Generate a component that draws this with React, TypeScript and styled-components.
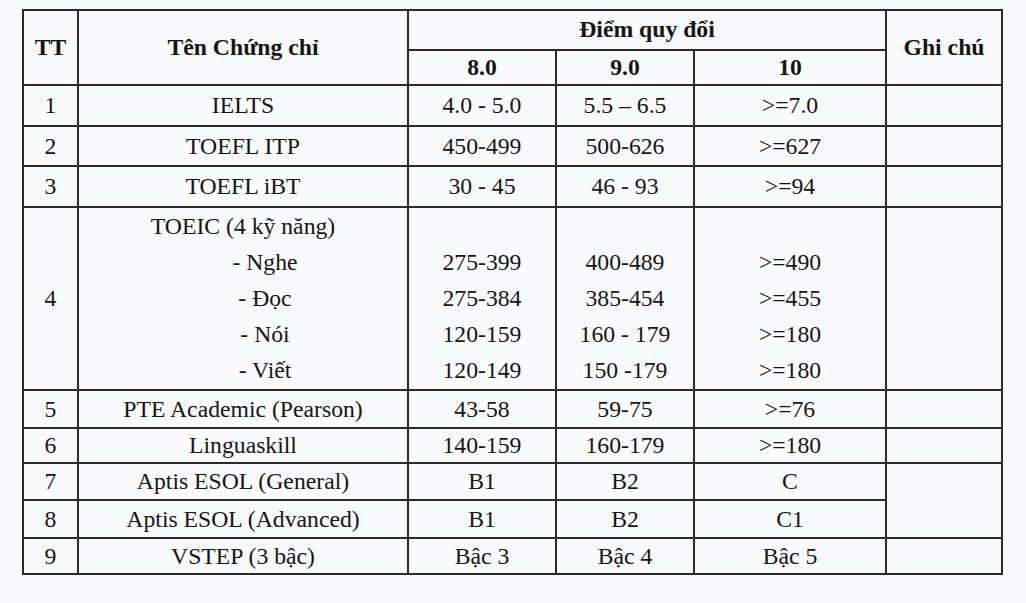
import React from "react";
import styled, { createGlobalStyle } from "styled-components";

const Global = createGlobalStyle`
  html, body { margin: 0; padding: 0; background: #f9fafb; }
  body { font-family: "Liberation Serif", "Times New Roman", serif; color: #151515; }
`;

const Page = styled.div`
  width: 1026px;
  height: 603px;
  padding: 9px 0 0 22px;
  box-sizing: border-box;
  background: #f9fafb;
`;

const Table = styled.table`
  border-collapse: collapse;
  table-layout: fixed;
  width: 979px;
  font-family: "Liberation Serif", "Times New Roman", serif;
  font-size: 23.7px;
  color: #151515;
`;

const Row = styled.tr<{ $h: number }>`
  height: ${(p) => p.$h}px;
`;

const Head = styled.th`
  border: 2px solid #2b2b2b;
  font-family: "Liberation Serif", "Times New Roman", serif;
  font-size: 23.7px;
  font-weight: bold;
  text-align: center;
  vertical-align: middle;
  padding: 0;
  line-height: 1;
`;

const Cell = styled.td<{ $top?: boolean }>`
  border: 2px solid #2b2b2b;
  font-family: "Liberation Serif", "Times New Roman", serif;
  font-size: 23.7px;
  text-align: center;
  vertical-align: ${(p) => (p.$top ? "top" : "middle")};
  padding: 0;
  line-height: 1.1;
`;

const Stack = styled.div`
  display: flex;
  flex-direction: column;
`;

const Line = styled.div<{ $indent?: boolean }>`
  height: 36px;
  line-height: 36px;
  text-align: center;
  padding-left: ${(p) => (p.$indent ? "44px" : "0")};
`;

type Simple = { tt: string; name: string; a: string; b: string; c: string; h: number };

const top: Simple[] = [
  { tt: "1", name: "IELTS", a: "4.0 - 5.0", b: "5.5 – 6.5", c: ">=7.0", h: 41 },
  { tt: "2", name: "TOEFL ITP", a: "450-499", b: "500-626", c: ">=627", h: 40 },
  { tt: "3", name: "TOEFL iBT", a: "30 - 45", b: "46 - 93", c: ">=94", h: 41 },
];

const toeic = {
  skills: ["- Nghe", "- Đọc", "- Nói", "- Viết"],
  a: ["275-399", "275-384", "120-159", "120-149"],
  b: ["400-489", "385-454", "160 - 179", "150 -179"],
  c: [">=490", ">=455", ">=180", ">=180"],
};

const ScoreStack: React.FC<{ values: string[] }> = ({ values }) => (
  <Stack>
    <Line>&nbsp;</Line>
    {values.map((v, i) => (
      <Line key={i}>{v}</Line>
    ))}
  </Stack>
);

export default function App() {
  return (
    <Page>
      <Global />
      <Table>
        <colgroup>
          <col style={{ width: 55 }} />
          <col style={{ width: 330 }} />
          <col style={{ width: 148 }} />
          <col style={{ width: 138 }} />
          <col style={{ width: 192 }} />
          <col style={{ width: 116 }} />
        </colgroup>
        <tbody>
          <Row $h={40}>
            <Head rowSpan={2}>TT</Head>
            <Head rowSpan={2}>Tên Chứng chỉ</Head>
            <Head colSpan={3}>Điểm quy đổi</Head>
            <Head rowSpan={2}>Ghi chú</Head>
          </Row>
          <Row $h={35}>
            <Head>8.0</Head>
            <Head>9.0</Head>
            <Head>10</Head>
          </Row>
          {top.map((r) => (
            <Row $h={r.h} key={r.tt}>
              <Cell>{r.tt}</Cell>
              <Cell>{r.name}</Cell>
              <Cell>{r.a}</Cell>
              <Cell>{r.b}</Cell>
              <Cell>{r.c}</Cell>
              <Cell />
            </Row>
          ))}
          <Row $h={183}>
            <Cell>4</Cell>
            <Cell $top>
              <Stack>
                <Line>TOEIC (4 kỹ năng)</Line>
                {toeic.skills.map((s) => (
                  <Line $indent key={s}>
                    {s}
                  </Line>
                ))}
              </Stack>
            </Cell>
            <Cell $top>
              <ScoreStack values={toeic.a} />
            </Cell>
            <Cell $top>
              <ScoreStack values={toeic.b} />
            </Cell>
            <Cell $top>
              <ScoreStack values={toeic.c} />
            </Cell>
            <Cell />
          </Row>
          <Row $h={38}>
            <Cell>5</Cell>
            <Cell>PTE Academic (Pearson)</Cell>
            <Cell>43-58</Cell>
            <Cell>59-75</Cell>
            <Cell>&gt;=76</Cell>
            <Cell />
          </Row>
          <Row $h={35}>
            <Cell>6</Cell>
            <Cell>Linguaskill</Cell>
            <Cell>140-159</Cell>
            <Cell>160-179</Cell>
            <Cell>&gt;=180</Cell>
            <Cell />
          </Row>
          <Row $h={37}>
            <Cell>7</Cell>
            <Cell>Aptis ESOL (General)</Cell>
            <Cell>B1</Cell>
            <Cell>B2</Cell>
            <Cell>C</Cell>
            <Cell rowSpan={2} />
          </Row>
          <Row $h={38}>
            <Cell>8</Cell>
            <Cell>Aptis ESOL (Advanced)</Cell>
            <Cell>B1</Cell>
            <Cell>B2</Cell>
            <Cell>C1</Cell>
          </Row>
          <Row $h={36}>
            <Cell>9</Cell>
            <Cell>VSTEP (3 bậc)</Cell>
            <Cell>Bậc 3</Cell>
            <Cell>Bậc 4</Cell>
            <Cell>Bậc 5</Cell>
            <Cell />
          </Row>
        </tbody>
      </Table>
    </Page>
  );
}
